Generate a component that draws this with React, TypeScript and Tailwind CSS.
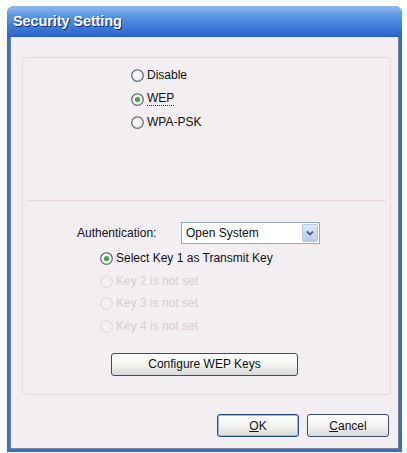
import React, { useState } from 'react';

// XP-style radio button glyph
function RadioDot({ checked, disabled }: { checked?: boolean; disabled?: boolean }) {
  return (
    <svg width="13" height="13" viewBox="0 0 13 13" className="shrink-0">
      <defs>
        <radialGradient id="rfill" cx="40%" cy="40%" r="70%">
          <stop offset="0%" stopColor="#ffffff" />
          <stop offset="100%" stopColor="#e4e2dc" />
        </radialGradient>
      </defs>
      <circle
        cx="6.5"
        cy="6.5"
        r="5.8"
        fill={disabled ? '#f4eff2' : 'url(#rfill)'}
        stroke={disabled ? '#e0d9dd' : '#4e5b6a'}
        strokeWidth="1.1"
      />
      {checked && <circle cx="6.5" cy="6.5" r="2.6" fill="#43a447" />}
    </svg>
  );
}

function Radio({
  label,
  checked,
  disabled,
  focused,
  onClick,
}: {
  label: string;
  checked?: boolean;
  disabled?: boolean;
  focused?: boolean;
  onClick?: () => void;
}) {
  return (
    <div
      onClick={disabled ? undefined : onClick}
      className={`flex items-center gap-[3px] h-[13px] ${disabled ? 'text-[#d6cfd3]' : 'text-[#111] cursor-default'}`}
    >
      <RadioDot checked={checked} disabled={disabled} />
      <span className={`leading-[13px] ${focused ? 'border-b border-dotted border-[#333]' : ''}`}>{label}</span>
    </div>
  );
}

function XpButton({ children, focused, className }: { children: React.ReactNode; focused?: boolean; className: string }) {
  return (
    <button
      className={`${className} h-[23px] rounded-[3px] border ${
        focused ? 'border-[#2d4a7c] shadow-[inset_0_0_0_1px_#9db6e6]' : 'border-[#3c4e6a]'
      } bg-[linear-gradient(#ffffff,#f2f2ee_55%,#d6d8dc)] text-[12px] text-[#111] flex items-center justify-center`}
    >
      {children}
    </button>
  );
}

export default function App() {
  const [mode, setMode] = useState('wep');

  return (
    <div className="w-[407px] h-[453px] bg-white pt-[6px] pl-[7px] font-['Liberation_Sans',Arial,sans-serif] text-[12px]">
      <div className="w-[395px] h-[446px] flex flex-col rounded-t-[7px] overflow-hidden bg-[#3a6ccf]">
        {/* title bar */}
        <div className="h-[31px] shrink-0 flex items-center pl-[6px] bg-[linear-gradient(#8fbaf0,#5b98e6_30%,#3a7ad8_70%,#2b5fc6)]">
          <span className="text-white font-bold text-[14.5px] tracking-[-0.1px] [text-shadow:1px_1px_0_#0a2a7a]">
            Security Setting
          </span>
        </div>

        {/* client area */}
        <div className="flex-1 mx-[3px] mb-[3px] border-l border-r border-b border-[#6f84a8] bg-[#f3eef1] flex flex-col">
          <div className="mt-[20px] ml-[11px] w-[369px] h-[338px] border border-[#e8dadf] rounded-[3px] flex flex-col">
            {/* encryption type */}
            <div className="h-[142px] pl-[108px] pt-[11px] flex flex-col gap-[10.5px]">
              <Radio label="Disable" checked={mode === 'off'} onClick={() => setMode('off')} />
              <Radio label="WEP" checked={mode === 'wep'} focused onClick={() => setMode('wep')} />
              <Radio label="WPA-PSK" checked={mode === 'wpa'} onClick={() => setMode('wpa')} />
            </div>

            <div className="h-px mx-[4px] bg-[#e8dadf]" />

            {/* WEP options */}
            <div className="flex flex-col pt-[21px]">
              <div className="flex items-center pl-[54px]">
                <span className="w-[104px] text-[#111]">Authentication:</span>
                <div className="w-[139px] h-[22px] border border-[#9aa8b8] bg-white flex items-center justify-between">
                  <span className="pl-[4px] text-[#111]">Open System</span>
                  <div className="w-[16px] h-[18px] mr-[1px] rounded-[2px] bg-[linear-gradient(#dfe8f8,#b8cbe8)] border border-[#b9c8e0] flex items-center justify-center">
                    <svg width="8" height="6" viewBox="0 0 8 6">
                      <path d="M1 1.5 L4 4.5 L7 1.5" fill="none" stroke="#4d6185" strokeWidth="1.8" />
                    </svg>
                  </div>
                </div>
              </div>

              <div className="pl-[77px] pt-[8px] flex flex-col gap-[9.5px]">
                <Radio label="Select Key 1 as Transmit Key" checked />
                <Radio label="Key 2 is not set" disabled />
                <Radio label="Key 3 is not set" disabled />
                <Radio label="Key 4 is not set" disabled />
              </div>

              <div className="pl-[88px] pt-[20px]">
                <XpButton className="w-[187px]">Configure WEP Keys</XpButton>
              </div>
            </div>
          </div>

          <div className="flex justify-end gap-[8px] pr-[9px] mt-[19px]">
            <XpButton className="w-[82px]" focused>
              <span><span className="underline">O</span>K</span>
            </XpButton>
            <XpButton className="w-[82px]">
              <span><span className="underline">C</span>ancel</span>
            </XpButton>
          </div>
        </div>
      </div>
    </div>
  );
}
